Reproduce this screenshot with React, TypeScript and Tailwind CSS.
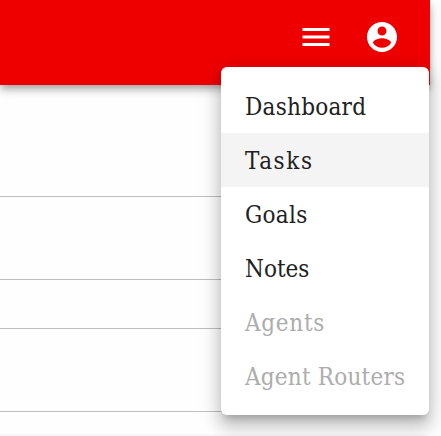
type MenuEntry = {
  label: string;
  spacing: string;
  selected?: boolean;
  disabled?: boolean;
};

const entries: MenuEntry[] = [
  { label: "Dashboard", spacing: "tracking-[0.25px]" },
  { label: "Tasks", spacing: "tracking-[1.6px]", selected: true },
  { label: "Goals", spacing: "tracking-[0.3px]" },
  { label: "Notes", spacing: "tracking-[0px]" },
  { label: "Agents", spacing: "tracking-[0.7px]", disabled: true },
  { label: "Agent Routers", spacing: "tracking-[0.2px]", disabled: true },
];

function HamburgerIcon() {
  return (
    <svg className="size-9" viewBox="0 0 24 24" fill="currentColor" aria-hidden="true">
      <path d="M3 18h18v-2H3v2zm0-5h18v-2H3v2zm0-7v2h18V6H3z" />
    </svg>
  );
}

function AccountIcon() {
  return (
    <svg className="size-9" viewBox="0 0 24 24" fill="currentColor" aria-hidden="true">
      <path d="M12 2C6.48 2 2 6.48 2 12s4.48 10 10 10 10-4.48 10-10S17.52 2 12 2zm0 3c1.66 0 3 1.34 3 3s-1.34 3-3 3-3-1.34-3-3 1.34-3 3-3zm0 14.2c-2.5 0-4.71-1.28-6-3.22.03-1.99 4-3.08 6-3.08 1.99 0 5.97 1.09 6 3.08-1.29 1.94-3.5 3.22-6 3.22z" />
    </svg>
  );
}

function AppMenu() {
  return (
    <ul
      role="menu"
      className="absolute left-[221px] top-[67px] w-[208px] rounded-md bg-white py-3 shadow-[0_7.5px_7.5px_-4.5px_rgba(0,0,0,0.2),0_12px_15px_1.5px_rgba(0,0,0,0.14),0_4.5px_21px_3px_rgba(0,0,0,0.12)]"
    >
      {entries.map(({ label, spacing, selected, disabled }) => (
        <li
          key={label}
          role="menuitem"
          aria-disabled={disabled}
          className={`flex h-[54px] items-center whitespace-nowrap px-6 pt-0.5 text-[24px] leading-9 ${spacing} ${
            selected ? "bg-[#f4f4f4]" : ""
          } ${disabled ? "text-[#adadad]" : "text-[#212121]"}`}
        >
          <span>{label}</span>
        </li>
      ))}
    </ul>
  );
}

export default function App() {
  return (
    <div className="relative flex h-[436px] w-[441px] flex-col overflow-hidden bg-[#fefefe] font-['DejaVu_Serif_Condensed','DejaVu_Serif',serif]">
      <header className="relative flex h-[85px] w-[430px] shrink-0 justify-end gap-[30px] bg-[#ef0000] pr-[30px] pt-[19px] text-white shadow-[0_3px_6px_-1.5px_rgba(0,0,0,0.2),0_6px_7.5px_rgba(0,0,0,0.14),0_1.5px_15px_rgba(0,0,0,0.12)]">
        <HamburgerIcon />
        <AccountIcon />
      </header>
      <main className="flex w-[428px] flex-col">
        <div className="h-28 border-b border-[#bdbdbd]" />
        <div className="h-[83px] border-b border-[#bdbdbd]" />
        <div className="h-[49px] border-b border-[#bdbdbd]" />
        <div className="h-[83px] border-b border-[#bdbdbd]" />
        <div className="h-[22px]" />
        <div className="h-0.5 bg-[#f7f7f7]" />
      </main>
      <AppMenu />
    </div>
  );
}
